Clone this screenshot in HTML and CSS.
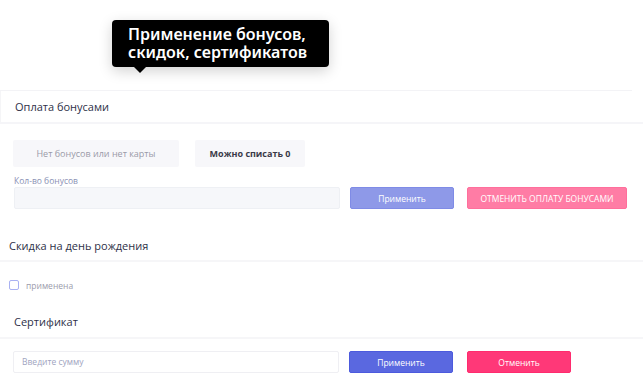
FILE: index.html
```html
<!DOCTYPE html>
<html lang="ru">
<head>
<meta charset="utf-8">
<link rel="stylesheet" href="styles.css">
</head>
<body>
<div class="tip-wrap">
  <div class="tip">Применение бонусов,<br>скидок, сертификатов</div>
</div>

<section class="bonus">
  <div class="bonus-head">Оплата бонусами</div>
  <div class="bonus-body">
    <div class="info-row">
      <div class="info info-wide">Нет бонусов или нет карты</div>
      <div class="info info-strong">Можно списать 0</div>
    </div>
    <div class="label">Кол-во бонусов</div>
    <div class="action-row">
      <div class="field field-gray"></div>
      <button class="btn btn-apply-dim">Применить</button>
      <button class="btn btn-cancel-dim">ОТМЕНИТЬ ОПЛАТУ БОНУСАМИ</button>
    </div>
  </div>
</section>

<section class="birthday">
  <div class="sec-head sec-head-bday">Скидка на день рождения</div>
  <label class="check-row"><span class="check"></span><span class="check-text">применена</span></label>
</section>

<section class="cert">
  <div class="sec-head sec-head-cert">Сертификат</div>
  <div class="action-row cert-row">
    <div class="field field-white">Введите сумму</div>
    <button class="btn btn-apply">Применить</button>
    <button class="btn btn-cancel">Отменить</button>
  </div>
</section>
</body>
</html>
```

FILE: styles.css
```css
* { box-sizing: border-box; }
html, body { margin: 0; padding: 0; background: #fff; }
body {
  width: 643px;
  height: 382px;
  overflow: hidden;
  font-family: "Open Sans", "Noto Sans", sans-serif;
  color: #2e3148;
}
.tip-wrap {
  padding: 20px 0 0 112px;
  height: 90px;
}
.tip {
  position: relative;
  width: 217px;
  height: 47px;
  background: #000;
  color: #fff;
  border-radius: 4px;
  font-family: "Noto Sans", "Open Sans", sans-serif;
  font-weight: 600;
  font-size: 16px;
  line-height: 18px;
  padding: 5px 0 0 16px;
  box-shadow: 0 4px 14px rgba(0,0,0,0.18);
}
.tip::after {
  content: "";
  position: absolute;
  left: 22px;
  bottom: -6px;
  border-left: 6px solid transparent;
  border-right: 6px solid transparent;
  border-top: 6px solid #000;
}
.bonus {
  border-top: 1px solid #f3f3f6;
  margin-right: 11px;
}
.bonus-head {
  height: 31px;
  padding-left: 14px;
  font-size: 11px;
  line-height: 31px;
  border-left: 1px solid #f5f5f7;
}
.bonus-body {
  border-top: 2px solid #f5f5f8;
  margin-right: -11px;
  padding: 16px 0 0 0;
}
.info-row {
  display: flex;
  gap: 16px;
  padding-left: 13px;
}
.info {
  height: 27px;
  background: #f7f7fa;
  border-radius: 2px;
  font-size: 9px;
  line-height: 27px;
  text-align: center;
}
.info-wide { width: 166px; color: #9a9aa8; }
.info-strong { width: 110px; font-weight: 700; color: #3a3a48; }
.label {
  padding: 8px 0 0 14px;
  height: 20px;
  font-size: 8.5px;
  line-height: 12px;
  color: #8a90b4;
}
.action-row {
  display: flex;
  align-items: center;
  padding-left: 14px;
}
.field {
  width: 326px;
  height: 22px;
  border-radius: 2px;
  font-size: 8.5px;
  line-height: 20px;
  padding-left: 8px;
  color: #a0a4c0;
}
.field-gray { background: #f6f7fa; border: 1px solid #eef0f4; }
.field-white { background: #fff; border: 1px solid #efeff3; }
.btn {
  height: 22px;
  border: 1px solid transparent;
  border-radius: 2px;
  font-family: "Open Sans", "Noto Sans", sans-serif;
  font-size: 8.5px;
  color: #fff;
  padding: 0;
}
.btn-apply-dim {
  width: 104px;
  margin-left: 10px;
  background: #8e99e8;
  border-color: #7f8be6;
}
.btn-cancel-dim {
  width: 160px;
  margin-left: 13px;
  background: #ff7ca5;
  border-color: #ff6f9c;
}
.birthday { padding-top: 28px; }
.sec-head {
  height: 17px;
  font-size: 11px;
  line-height: 17px;
  border-bottom: 2px solid #f6f6f8;
  box-sizing: content-box;
}
.sec-head-bday { padding: 0 0 6px 9px; }
.sec-head-cert { padding: 0 0 7px 14px; }
.check-row {
  display: flex;
  align-items: center;
  gap: 7px;
  padding: 17px 0 0 9px;
  height: 29px;
}
.check {
  width: 10px;
  height: 10px;
  border: 1px solid #a9b1f2;
  border-radius: 2px;
}
.check-text { font-size: 8.5px; color: #9c9cac; }
.cert { padding-top: 22px; }
.cert-row { padding-left: 13px; padding-top: 12px; }
.btn-apply {
  width: 104px;
  margin-left: 10px;
  background: #5a68e0;
  border-color: #4c5add;
}
.btn-cancel {
  width: 104px;
  margin-left: 14px;
  background: #ff3878;
  border-color: #ff2b6e;
}
```
